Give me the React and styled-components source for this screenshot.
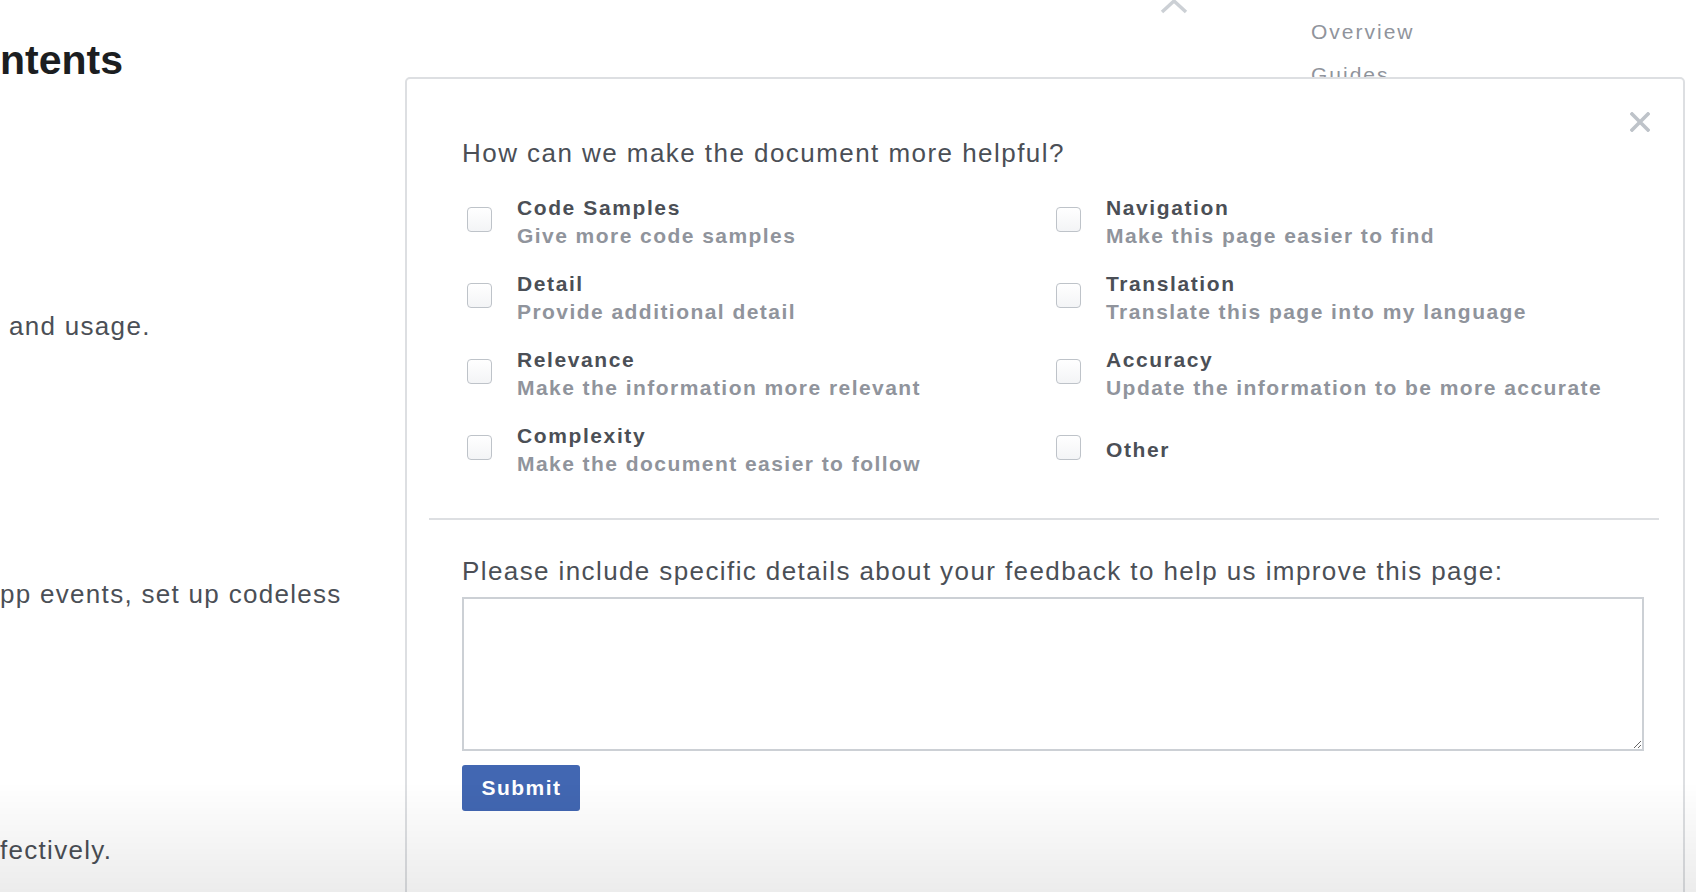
import React from 'react';
import styled, { createGlobalStyle } from 'styled-components';

const GlobalStyle = createGlobalStyle`
  html, body {
    margin: 0;
    padding: 0;
    height: 100%;
    overflow: hidden;
    background: #fff;
  }
  body {
    font-family: 'Liberation Sans', Arial, Helvetica, sans-serif;
    color: #4b4f56;
  }
`

const StyledPage = styled.div`
  position: relative;
  display: flex;
  flex-direction: row;
  width: 1696px;
  height: 892px;
  overflow: hidden;
`

const StyledMain = styled.div`
  display: flex;
  flex-direction: column;
  width: 1162px;
  flex-shrink: 0;
`

const StyledHeading = styled.h1`
  margin: 36px 0 0 0;
  font-size: 41px;
  line-height: 48px;
  font-weight: 700;
  color: #1c1e21;
  white-space: nowrap;
`

const StyledParagraph = styled.p`
  margin: ${props => props.top}px 0 0 ${props => props.indent || 0}px;
  font-size: 26px;
  line-height: 36px;
  letter-spacing: 1.3px;
  color: #4b4f56;
  white-space: nowrap;
`

const StyledAside = styled.div`
  display: flex;
  flex-direction: row;
  align-items: flex-start;
`

const StyledChevron = styled.svg`
  width: 28px;
  height: 16px;
  margin-top: -2px;
  margin-left: -2px;
  flex-shrink: 0;
`

const StyledNav = styled.ul`
  list-style: none;
  margin: 10px 0 0 123px;
  padding: 0;
`

const StyledNavItem = styled.li`
  font-size: 21px;
  line-height: 43px;
  letter-spacing: 2px;
  color: #90949c;
  white-space: nowrap;
`

const StyledModal = styled.div`
  position: absolute;
  left: 405px;
  top: 77px;
  width: 1280px;
  height: 900px;
  box-sizing: border-box;
  background: #fff;
  border: 2px solid #dddfe2;
  border-radius: 5px;
  display: flex;
  flex-direction: column;
`

const StyledClose = styled.button`
  position: absolute;
  top: 33px;
  right: 33px;
  width: 20px;
  height: 20px;
  padding: 0;
  border: none;
  background: none;
  cursor: pointer;
  display: flex;
`

const StyledSection = styled.div`
  display: flex;
  flex-direction: column;
  padding: ${props => props.top}px 39px 0 55px;
`

const StyledQuestion = styled.div`
  font-size: 26px;
  line-height: 30px;
  letter-spacing: ${props => props.spacing}px;
  color: #4b4f56;
  white-space: nowrap;
`

const StyledGrid = styled.div`
  display: grid;
  grid-template-columns: 589px 1fr;
  row-gap: 20px;
  margin-top: 26px;
`

const StyledOption = styled.label`
  display: flex;
  flex-direction: row;
  align-items: center;
  gap: 25px;
  min-height: 56px;
  padding-left: 5px;
  cursor: pointer;
`

const StyledCheckbox = styled.input`
  appearance: none;
  -webkit-appearance: none;
  flex-shrink: 0;
  width: 25px;
  height: 25px;
  margin: 0 0 5px 0;
  box-sizing: border-box;
  border: 1.5px solid #bec3c9;
  border-radius: 4px;
  background: linear-gradient(#ffffff, #f3f4f6);
`

const StyledOptionText = styled.div`
  display: flex;
  flex-direction: column;
`

const StyledOptionTitle = styled.span`
  font-size: 21px;
  line-height: 28px;
  font-weight: 700;
  letter-spacing: 1.6px;
  color: #4b4f56;
  white-space: nowrap;
`

const StyledOptionDesc = styled.span`
  font-size: 21px;
  line-height: 28px;
  font-weight: 700;
  letter-spacing: 1.45px;
  color: #90949c;
  white-space: nowrap;
`

const StyledDivider = styled.hr`
  margin: 40px 24px 0 22px;
  border: none;
  border-top: 2px solid #dddfe2;
`

const StyledTextarea = styled.textarea`
  margin-top: 11px;
  width: 100%;
  height: 154px;
  box-sizing: border-box;
  border: 2px solid #ccd0d5;
  border-radius: 0;
  padding: 8px;
  font-family: inherit;
  font-size: 20px;
  color: #1c1e21;
  outline: none;
`

const StyledSubmit = styled.button`
  align-self: flex-start;
  margin-top: 14px;
  height: 46px;
  width: 118px;
  padding: 0 0 0 1px;
  border: none;
  border-radius: 3px;
  background: #4267b2;
  color: #fff;
  font-family: inherit;
  font-size: 21px;
  font-weight: 700;
  letter-spacing: 1.5px;
  cursor: pointer;
`

const StyledFade = styled.div`
  position: fixed;
  left: 0;
  right: 0;
  bottom: 0;
  height: 110px;
  pointer-events: none;
  background: linear-gradient(rgba(0, 0, 0, 0), rgba(0, 0, 0, 0.075));
`

const options = [
  { title: 'Code Samples', desc: 'Give more code samples' },
  { title: 'Navigation', desc: 'Make this page easier to find' },
  { title: 'Detail', desc: 'Provide additional detail' },
  { title: 'Translation', desc: 'Translate this page into my language' },
  { title: 'Relevance', desc: 'Make the information more relevant' },
  { title: 'Accuracy', desc: 'Update the information to be more accurate' },
  { title: 'Complexity', desc: 'Make the document easier to follow' },
  { title: 'Other' },
]

const Option = ({ title, desc }) => (
  <StyledOption>
    <StyledCheckbox type="checkbox" />
    <StyledOptionText>
      <StyledOptionTitle>{title}</StyledOptionTitle>
      {desc ? <StyledOptionDesc>{desc}</StyledOptionDesc> : null}
    </StyledOptionText>
  </StyledOption>
)

const App = () => {
  return (
    <>
      <GlobalStyle />
      <StyledPage>
        <StyledMain>
          <StyledHeading>ntents</StyledHeading>
          <StyledParagraph top={224} indent={9}>and usage.</StyledParagraph>
          <StyledParagraph top={232}>pp events, set up codeless</StyledParagraph>
          <StyledParagraph top={220}>fectively.</StyledParagraph>
        </StyledMain>
        <StyledAside>
          <StyledChevron viewBox="0 0 28 16">
            <polyline points="2,14 14,3 26,14" fill="none" stroke="#ccd0d5" strokeWidth="3.5" />
          </StyledChevron>
          <StyledNav>
            <StyledNavItem>Overview</StyledNavItem>
            <StyledNavItem>Guides</StyledNavItem>
          </StyledNav>
        </StyledAside>

        <StyledModal>
          <StyledClose aria-label="Close">
            <svg width="20" height="20" viewBox="0 0 20 20">
              <path d="M2 2 L18 18 M18 2 L2 18" stroke="#bec3c9" strokeWidth="3.6" strokeLinecap="square" />
            </svg>
          </StyledClose>
          <StyledSection top={59}>
            <StyledQuestion spacing={1.45}>How can we make the document more helpful?</StyledQuestion>
            <StyledGrid>
              {options.map(o => <Option key={o.title} title={o.title} desc={o.desc} />)}
            </StyledGrid>
          </StyledSection>
          <StyledDivider />
          <StyledSection top={36}>
            <StyledQuestion spacing={1.4}>Please include specific details about your feedback to help us improve this page:</StyledQuestion>
            <StyledTextarea />
            <StyledSubmit>Submit</StyledSubmit>
          </StyledSection>
        </StyledModal>
        <StyledFade />
      </StyledPage>
    </>
  )
}

export default App;
